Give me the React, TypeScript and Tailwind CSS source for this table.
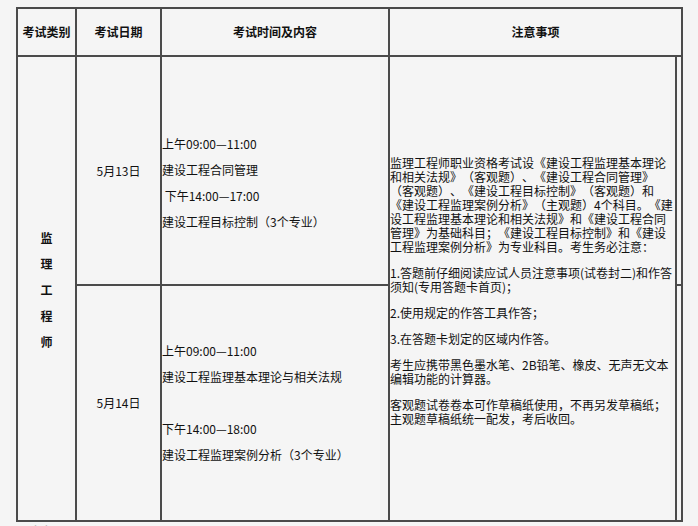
import React from "react";

const font = "font-['Noto_Sans_CJK_SC','Liberation_Sans',sans-serif]";

const notes: string[][] = [
  [
    "监理工程师职业资格考试设《建设工程监理基本理论",
    "和相关法规》（客观题）、《建设工程合同管理》",
    "（客观题）、《建设工程目标控制》（客观题）和",
    "《建设工程监理案例分析》（主观题）4个科目。《建",
    "设工程监理基本理论和相关法规》和《建设工程合同",
    "管理》为基础科目；《建设工程目标控制》和《建设",
    "工程监理案例分析》为专业科目。考生务必注意：",
  ],
  ["1.答题前仔细阅读应试人员注意事项(试卷封二)和作答", "须知(专用答题卡首页)；"],
  ["2.使用规定的作答工具作答；"],
  ["3.在答题卡划定的区域内作答。"],
  ["考生应携带黑色墨水笔、2B铅笔、橡皮、无声无文本", "编辑功能的计算器。"],
  ["客观题试卷卷本可作草稿纸使用，不再另发草稿纸；", "主观题草稿纸统一配发，考后收回。"],
];

export default function App() {
  return (
    <div className={`min-h-[526px] w-[698px] bg-[#f5f5f5] pl-[16px] pt-[7px] text-[12px] text-[#111] [text-spacing-trim:space-all] ${font}`}>
      <div className="grid w-fit grid-cols-[57px_83px_226px_285px_4px] grid-rows-[46px_227px_234px] gap-[2px] bg-[#4b4b4b] p-[2px]">
        <div className="col-start-1 row-start-1 flex items-center justify-center bg-[#f5f5f5] font-bold">考试类别</div>
        <div className="col-start-2 row-start-1 flex items-center justify-center bg-[#f5f5f5] font-bold">考试日期</div>
        <div className="col-start-3 row-start-1 flex items-center justify-center bg-[#f5f5f5] font-bold">考试时间及内容</div>
        <div className="col-span-2 col-start-4 row-start-1 flex items-center justify-center bg-[#f5f5f5] font-bold">注意事项</div>

        <div className="col-start-1 row-span-2 row-start-2 flex flex-col items-center justify-center bg-[#f5f5f5] pt-[3px] font-bold leading-[26px]">
          <span>监</span>
          <span>理</span>
          <span>工</span>
          <span>程</span>
          <span>师</span>
        </div>

        <div className="col-start-2 row-start-2 flex items-center justify-center bg-[#f5f5f5]">5月13日</div>
        <div className="col-start-3 row-start-2 flex flex-col justify-center bg-[#f5f5f5] pt-[24px] leading-[26px]">
          <div>上午09:00—11:00</div>
          <div>建设工程合同管理</div>
          <div>&nbsp;下午14:00—17:00</div>
          <div>建设工程目标控制（3个专业）</div>
        </div>

        <div className="col-start-4 row-span-2 row-start-2 flex flex-col justify-center gap-[12px] bg-[#f5f5f5] pt-[4px] leading-[14px]">
          {notes.map((p, i) => (
            <div key={i}>
              {p.map((l, j) => (
                <div key={j} className="whitespace-nowrap">
                  {l}
                </div>
              ))}
            </div>
          ))}
        </div>
        <div className="col-start-5 row-start-2 bg-[#f5f5f5]" />

        <div className="col-start-2 row-start-3 flex items-center justify-center bg-[#f5f5f5]">5月14日</div>
        <div className="col-start-3 row-start-3 flex flex-col justify-center bg-[#f5f5f5] leading-[26px]">
          <div>上午09:00—11:00</div>
          <div>建设工程监理基本理论与相关法规</div>
          <div>&nbsp;</div>
          <div>下午14:00—18:00</div>
          <div>建设工程监理案例分析（3个专业）</div>
        </div>
        <div className="col-start-5 row-start-3 bg-[#f5f5f5]" />
      </div>
      <div className="pl-[4px] pt-[3px] font-bold leading-[14px]">温馨提示：</div>
    </div>
  );
}
